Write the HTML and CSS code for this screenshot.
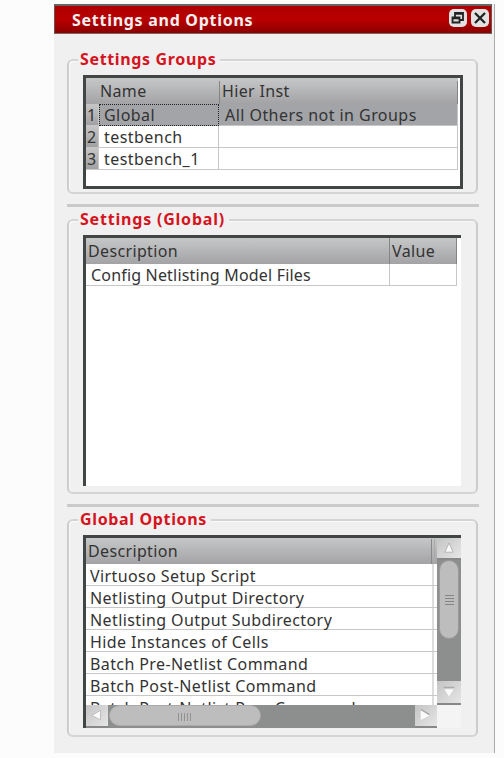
FILE: index.html
```html
<!DOCTYPE html>
<html lang="en">
<head>
<meta charset="utf-8">
<title>Settings and Options</title>
<link rel="stylesheet" href="styles.css">
</head>
<body>
<main class="panel">
  <header class="titlebar">
    <h1>Settings and Options</h1>
    <button class="win" aria-label="Float"><svg viewBox="0 0 18 18"><path d="M6 4h8v7h-8z M6 4.8h8" fill="none" stroke="#222" stroke-width="1.8"/><path d="M3.5 8.5h7v5h-7z M3.5 9.3h7" fill="#ddd" stroke="#222" stroke-width="1.8"/></svg></button>
    <button class="win" aria-label="Close"><svg viewBox="0 0 18 18"><path d="M4 4l10 10M14 4L4 14" stroke="#222" stroke-width="2.3"/></svg></button>
  </header>

  <section class="group groups">
    <h2>Settings Groups</h2>
    <div class="frame">
      <div class="grid3 head"><span></span><span class="name">Name</span><span class="hier">Hier Inst</span></div>
      <div class="grid3 row selected"><b>1</b><span class="focus">Global</span><span>All Others not in Groups</span></div>
      <div class="grid3 row"><b>2</b><span>testbench</span><span></span></div>
      <div class="grid3 row"><b>3</b><span>testbench_1</span><span></span></div>
    </div>
  </section>
  <hr>
  <section class="group settings">
    <h2>Settings (Global)</h2>
    <div class="frame open">
      <div class="grid2 head"><span>Description</span><span>Value</span></div>
      <div class="grid2 row"><span>Config Netlisting Model Files</span><span></span></div>
    </div>
  </section>
  <hr>
  <section class="group options">
    <h2>Global Options</h2>
    <div class="frame open scroller">
      <div class="view">
        <div class="head desc">Description<i></i></div>
        <ul>
          <li>Virtuoso Setup Script</li>
          <li>Netlisting Output Directory</li>
          <li>Netlisting Output Subdirectory</li>
          <li>Hide Instances of Cells</li>
          <li>Batch Pre-Netlist Command</li>
          <li>Batch Post-Netlist Command</li>
          <li>Batch Post-Netlist Proc Command</li>
        </ul>
      </div>
      <div class="vbar">
        <div class="arrow"><svg viewBox="0 0 24 24"><path d="M7 17L12 6l5 11z" fill="#fafafa" stroke="#aaa"/></svg></div>
        <div class="thumb"></div>
        <div class="arrow end"><svg viewBox="0 0 24 24"><path d="M6 7h12" stroke="#aaa" stroke-width="1.5"/><path d="M7 9h10l-5 8z" fill="#fafafa"/></svg></div>
      </div>
      <div class="hbar">
        <div class="arrow"><svg viewBox="0 0 24 24"><path d="M16 6v11L6 12z" fill="#fafafa" stroke="#aaa" stroke-width=".8"/></svg></div>
        <div class="thumb"></div>
        <div class="arrow end"><svg viewBox="0 0 24 24"><path d="M6 5v12l10-5z" fill="#fafafa"/><path d="M6 5l10 6" stroke="#aaa" stroke-width="1.5"/></svg></div>
      </div>
    </div>
  </section>
</main>
</body>
</html>
```
FILE: styles.css
```css
* { box-sizing: border-box; }
body { margin: 0; width: 504px; height: 758px; overflow: hidden; background: #fcfcfc; font: 16px/20px "Noto Sans", "Open Sans", sans-serif; color: #333; }
h1, h2, ul { margin: 0; padding: 0; list-style: none; }
.panel { width: 441px; height: 749px; margin: 4px 0 0 54px; background: #f0f0f1; border-right: 1px solid #aaa; overflow: hidden; }
.titlebar { width: 438px; height: 30px; display: flex; align-items: center; gap: 4px; padding: 0 2px 3px 17px; background: linear-gradient(#ad0000, #b90000 50%, #8b0000); border: 1px solid #655; border-top: 2px solid #666; border-bottom-color: #766; }
h1 { flex: 1; padding-top: 3px; color: #f4f0f0; font-size: 16px; line-height: 22px; letter-spacing: .72px; white-space: nowrap; }
.win { width: 18px; height: 18px; padding: 0; border: 0; border-radius: 5px; background: #e2e2e2; }
.win svg, .arrow svg { display: block; width: 100%; height: 100%; }

.group { width: 411px; margin-left: 13px; padding: 14px 0 0 16px; border: 2px solid #ccc; border-top-color: #d4d4d4; border-bottom-color: #d4d4d4; border-radius: 6px; box-shadow: inset 1px 1px #fafafa; }
.groups { height: 135px; margin-top: 25px; }
.settings { height: 275px; margin-top: 12px; }
.options { height: 218px; margin-top: 12px; }
h2 { width: max-content; height: 20px; margin: -26px 0 6px -7px; padding: 0 4px 0 2px; background: #f0f0f1; color: #d5141e; font-size: 16px; line-height: 20px; letter-spacing: .65px; white-space: nowrap; }
.settings h2 { letter-spacing: .8px; }
hr { width: 412px; height: 3px; margin: 10px 0 0 13px; border: 0; background: #c9cac9; }
.group .frame { margin-left: -2px; }
.frame { width: 380px; height: 114px; background: #fff; border: 3px solid #424545; }
.frame.open { width: 378px; border-right: 0; border-bottom: 0; }
.settings .frame { height: 251px; }
.head { height: 26px; line-height: 26px; background: linear-gradient(#c6c7c7, #a3a3a6); letter-spacing: .35px; }
.grid3 { width: 372px; display: grid; grid-template-columns: 13px 120px 239px; }
.grid3.head .name { padding-left: 1px; }
.grid3.head .hier { margin-top: 3px; height: 23px; line-height: 20px; padding-left: 2px; border-left: 1px solid #858585; border-right: 1px solid #858585; }
.row { height: 22px; grid-template-rows: 22px; line-height: 23px; letter-spacing: .45px; }
.row > * { height: 22px; border-bottom: 1px solid #c7c7c7; border-right: 1px solid #c7c7c7; white-space: nowrap; }
.row b { font-weight: 400; background: linear-gradient(#c6c6c6, #a1a1a3); letter-spacing: 0; padding-left: 1px; }
.row span { padding-left: 5px; }
.row span:last-child { padding-left: 6px; }
.selected span { background: #a2a4a7; }
.row .focus { border: 1px dotted #222; line-height: 21px; padding-left: 4px; }
.grid2 { width: 371px; display: grid; grid-template-columns: 304px 67px; }
.grid2.head span { padding-left: 2px; border-right: 1px solid #858585; }
.settings .row { letter-spacing: .18px; }
.head.desc { padding-left: 2px; display: flex; justify-content: space-between; }
.desc i { width: 4px; margin: 1px 2px 0 0; border-left: 1px solid #888; border-right: 1px solid #aaa; }
.scroller { height: 193px; display: grid; grid-template-columns: 351px 24px; grid-template-rows: 167px 23px; }
.options .frame { background: #f4f4f4; }
.view { background: #fff; overflow: hidden; }
li { height: 22px; line-height: 25px; padding-left: 4px; border-bottom: 1px solid #c7c7c7; letter-spacing: .4px; white-space: nowrap; background: linear-gradient(#ddd, #ddd) 346px 0 / 2px 22px no-repeat; }
.vbar, .hbar { display: flex; background: #8d8e8e; }
.vbar { flex-direction: column; }
.arrow { flex: none; background: linear-gradient(135deg, #c4c4c4, #e6e6e6); border-bottom: 2px solid #888; }
.vbar .arrow { height: 22px; }
.vbar .end { height: 24px; margin-top: auto; }
.hbar .arrow { width: 22px; }
.hbar .end { margin-left: auto; }
.vbar .thumb { height: 79px; margin: 0 2px; border: 1px solid #999; border-radius: 10px; background: linear-gradient(#858585, #858585) 5px 34px / 9px 1px no-repeat, linear-gradient(#858585, #858585) 5px 37px / 9px 1px no-repeat, linear-gradient(#858585, #858585) 5px 40px / 9px 1px no-repeat, linear-gradient(#858585, #858585) 5px 43px / 9px 1px no-repeat, #bdbdbd; }
.hbar .thumb { width: 152px; height: 21px; margin-left: 1px; border: 1px solid #aaa; border-radius: 11px; background: repeating-linear-gradient(90deg, #929292 0 1px, #bdbdbd 1px 3px) 68px 7px / 14px 8px no-repeat, #bdbdbd; }
```
